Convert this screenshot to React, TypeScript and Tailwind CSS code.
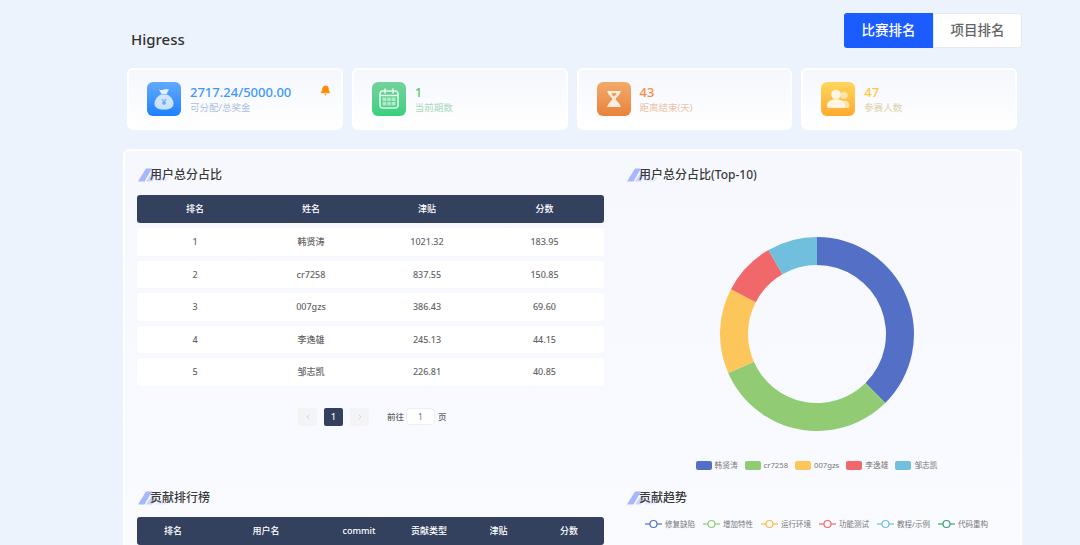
import { Bell, ChevronLeft, ChevronRight } from 'lucide-react';

const stats = [
  { value: '2717.24/5000.00', label: '可分配/总奖金', tile: 'from-[#62aafb] to-[#1a80ff]', valueCls: 'text-[#3f98fb]', labelCls: 'text-[#abc0de]', icon: 'bag' },
  { value: '1', label: '当前期数', tile: 'from-[#72d29b] to-[#37d07f]', valueCls: 'text-[#5ac963]', labelCls: 'text-[#a8d9bd]', icon: 'calendar' },
  { value: '43', label: '距离结束(天)', tile: 'from-[#f2aa6b] to-[#e8833a]', valueCls: 'text-[#f68c4b]', labelCls: 'text-[#ebc3a9]', icon: 'hourglass' },
  { value: '47', label: '参赛人数', tile: 'from-[#ffd65c] to-[#ffaa2d]', valueCls: 'text-[#fbca3e]', labelCls: 'text-[#dad1a4]', icon: 'people' },
];

const users = [
  ['1', '韩贤涛', '1021.32', '183.95'],
  ['2', 'cr7258', '837.55', '150.85'],
  ['3', '007gzs', '386.43', '69.60'],
  ['4', '李逸雄', '245.13', '44.15'],
  ['5', '邹志凯', '226.81', '40.85'],
];

const slices = [
  { name: '韩贤涛', score: 183.95, color: '#5470c6' },
  { name: 'cr7258', score: 150.85, color: '#91cc75' },
  { name: '007gzs', score: 69.6, color: '#fcc65a' },
  { name: '李逸雄', score: 44.15, color: '#f0686a' },
  { name: '邹志凯', score: 40.85, color: '#70bfdc' },
];

const trends = [
  { name: '修复缺陷', color: '#5470c6' },
  { name: '增加特性', color: '#91cc75' },
  { name: '运行环境', color: '#fbb84a' },
  { name: '功能测试', color: '#f0686a' },
  { name: '教程/示例', color: '#70bfdc' },
  { name: '代码重构', color: '#3ba272' },
];

function StatIcon({ kind }: { kind: string }) {
  if (kind === 'bag') {
    return (
      <svg viewBox="0 0 34 34" className="h-full w-full">
        <path d="M12 7.500c2 1 3.500.5 5 0s3.500-.5 5 0l-2.500 4.500h-5z" fill="#fff" fillOpacity="0.85" />
        <path d="M14 12.500h6c4 2 6.500 5.500 6.500 9 0 4-3.500 6-9.500 6s-9.500-2-9.500-6c0-3.500 2.500-7 6.500-9z" fill="#fff" fillOpacity="0.75" />
        <text x="17" y="23" textAnchor="middle" fontSize="8.500" fontWeight="700" fill="#6aa9f5">¥</text>
      </svg>
    );
  }
  if (kind === 'calendar') {
    return (
      <svg viewBox="0 0 34 34" className="h-full w-full">
        <rect x="8" y="9" width="18" height="17" rx="3" fill="none" stroke="#fff" strokeOpacity="0.8" strokeWidth="1.600" />
        <path d="M8.500 13.500h17" stroke="#fff" strokeOpacity="0.8" strokeWidth="1.500" />
        <path d="M13 7v4M21 7v4" stroke="#fff" strokeOpacity="0.85" strokeWidth="1.500" strokeLinecap="round" />
        <path d="M10.500 15.500h13v8h-13z" fill="#fff" fillOpacity="0.55" />
        <path d="M10.500 19.500h13M14.800 15.500v8M19.200 15.500v8" stroke="#5ad08f" strokeWidth="0.900" />
      </svg>
    );
  }
  if (kind === 'hourglass') {
    return (
      <svg viewBox="0 0 34 34" className="h-full w-full">
        <path d="M10 9h14l-.8 1.500c-.8 3-3.700 4.500-4.700 6.500 1 2 3.900 3.500 4.700 6.500l.8 1.500H10l.8-1.500c.8-3 3.700-4.500 4.700-6.500-1-2-3.900-3.500-4.700-6.500z" fill="#fff" fillOpacity="0.82" />
        <path d="M14.500 11h5l-1.500 3.200h-2z" fill="#ee9c58" />
      </svg>
    );
  }
  return (
    <svg viewBox="0 0 34 34" className="h-full w-full">
      <circle cx="23" cy="13.500" r="3.600" fill="#fff" fillOpacity="0.55" />
      <path d="M22 18.500c4.500-.5 6.500 2 6.500 6 0 1-1 1.500-2.500 1.500h-5z" fill="#fff" fillOpacity="0.55" />
      <circle cx="15" cy="12.500" r="4.800" fill="#fff" fillOpacity="0.85" />
      <path d="M6 24c0-4.500 3.500-6.800 9-6.800s9 2.300 9 6.800c0 1.300-1 2-2.500 2h-13C7 26 6 25.300 6 24z" fill="#fff" fillOpacity="0.85" />
    </svg>
  );
}

function SectionTitle({ children }: { children: string }) {
  return (
    <div className="relative flex h-5 items-center pl-[13px] pt-[2px] text-[12px] font-medium text-[#3a3a3a]">
      <svg viewBox="0 0 35 14" className="absolute left-px top-[4px] h-[14px] w-[35px]">
        <path d="M0 13.500 8 .5h6L6.500 13.500z" fill="#a5b7ff" />
        <path d="M8 13.500 14 4.500h5l-5 9z" fill="#c8d3fe" />
        <path d="M17 13.500 21 9h10l-3 4.500z" fill="#e6ebfe" />
      </svg>
      <span className="relative">{children}</span>
    </div>
  );
}

function arcPath(start: number, end: number, r1: number, r2: number, c: number) {
  const pt = (a: number, r: number) => `${(c + r * Math.sin(a)).toFixed(2)} ${(c - r * Math.cos(a)).toFixed(2)}`;
  const large = end - start > Math.PI ? 1 : 0;
  return `M${pt(start, r1)}A${r1} ${r1} 0 ${large} 1 ${pt(end, r1)}L${pt(end, r2)}A${r2} ${r2} 0 ${large} 0 ${pt(start, r2)}Z`;
}

function Donut() {
  const total = slices.reduce((sum, s) => sum + s.score, 0);
  let angle = 0;
  return (
    <svg viewBox="0 0 200 200" className="h-[200px] w-[200px]">
      {slices.map((s) => {
        const start = angle;
        angle += (s.score / total) * Math.PI * 2;
        return <path key={s.name} d={arcPath(start, angle, 97, 69, 100)} fill={s.color} />;
      })}
    </svg>
  );
}

export default function App() {
  return (
    <div className="flex h-[545px] w-[1080px] flex-col overflow-hidden bg-[#ecf3fc] pl-[123px] pr-[58px] pt-[13px] font-['Noto_Sans','Noto_Sans_CJK_SC',sans-serif]">
      {/* Header */}
      <div className="flex h-[35px] shrink-0 justify-between">
        <h1 className="pl-2 pt-[15px] text-[15px] font-medium leading-[22px] text-[#333]">Higress</h1>
        <div className="flex h-[35px] text-[13.500px] font-medium">
          <div className="flex w-[89px] items-center justify-center rounded-l-[3px] bg-[#1a5cff] text-white">比赛排名</div>
          <div className="flex w-[89px] items-center justify-center rounded-r-[3px] border border-[#e4e9f2] bg-white text-[#666]">项目排名</div>
        </div>
      </div>

      {/* Stat cards */}
      <div className="mt-[20px] grid shrink-0 grid-cols-4 gap-[9px] pl-1 pr-[5px]">
        {stats.map((s) => (
          <div key={s.label} className="relative flex h-[62px] items-center rounded-md border-2 border-white bg-gradient-to-b from-[#f5f7fd] to-white pl-[18px]">
            <div className={`h-[34px] w-[34px] rounded-md bg-gradient-to-b ${s.tile}`}>
              <StatIcon kind={s.icon} />
            </div>
            <div className="mb-[1px] ml-[9px]">
              <div className={`text-[13px] font-medium leading-[18px] ${s.valueCls}`}>{s.value}</div>
              <div className={`text-[9.500px] leading-[14px] ${s.labelCls}`}>{s.label}</div>
            </div>
            {s.icon === 'bag' && (
              <Bell className="absolute right-[10px] top-[15px] h-[11px] w-[11px] fill-[#ff8a00] text-[#ff8a00]" />
            )}
          </div>
        ))}
      </div>

      {/* Main panel, runs past the bottom of the window */}
      <div className="mt-[19px] h-[640px] shrink-0 rounded-md border-2 border-white bg-gradient-to-b from-[#f6f8fe] to-[#fbfcff] px-3 pt-[13px]">
        <div className="grid grid-cols-[467px_381px] gap-x-[22px]">
          <div className="h-[323px]">
            <SectionTitle>用户总分占比</SectionTitle>
            <div className="mt-[11px] grid h-7 grid-cols-[116px_116px_116px_119px] items-center rounded-[3px] bg-[#33415f] text-center text-[9px] font-medium text-white">
              <span>排名</span>
              <span>姓名</span>
              <span>津贴</span>
              <span>分数</span>
            </div>
            <div className="mt-[5px] flex flex-col gap-[5px]">
              {users.map((row) => (
                <div key={row[0]} className="grid h-[27.600px] grid-cols-[116px_116px_116px_119px] items-center rounded-[3px] bg-white text-center text-[9px] font-medium text-[#666]">
                  {row.map((cell) => (
                    <span key={cell}>{cell}</span>
                  ))}
                </div>
              ))}
            </div>
            <div className="ml-[161px] mt-[22px] flex h-[18px] items-center text-[8.500px] font-medium text-[#666]">
              <div className="flex h-[18px] w-[19px] items-center justify-center rounded-[2px] bg-[#f4f4f5] text-[#c0c4cc]">
                <ChevronLeft className="h-2 w-2" />
              </div>
              <div className="ml-[7px] flex h-[18px] w-[19px] items-center justify-center rounded-[2px] bg-[#33415f] text-white">1</div>
              <div className="ml-[7px] flex h-[18px] w-[19px] items-center justify-center rounded-[2px] bg-[#f4f4f5] text-[#c0c4cc]">
                <ChevronRight className="h-2 w-2" />
              </div>
              <span className="ml-[18px]">前往</span>
              <div className="ml-[2px] flex h-[17px] w-[29px] items-center justify-center rounded-sm border border-[#eceef3] bg-white font-normal text-[#777]">1</div>
              <span className="ml-[3px]">页</span>
            </div>
          </div>

          <div className="h-[323px]">
            <SectionTitle>用户总分占比(Top-10)</SectionTitle>
            <div className="mt-[49.500px] flex justify-center">
              <Donut />
            </div>
            <div className="mt-[27px] flex justify-center gap-[7px] text-[7.700px] leading-[9px] text-[#777]">
              {slices.map((s) => (
                <div key={s.name} className="flex items-center gap-[3px]">
                  <span className="h-[9px] w-4 rounded-[2px]" style={{ backgroundColor: s.color }} />
                  <span>{s.name}</span>
                </div>
              ))}
            </div>
          </div>

          <div>
            <SectionTitle>贡献排行榜</SectionTitle>
            <div className="mt-[10px] grid h-7 grid-cols-[72px_114px_72px_68px_71px_70px] items-center rounded-[3px] bg-[#33415f] text-center text-[9px] font-medium text-white">
              <span>排名</span>
              <span>用户名</span>
              <span>commit</span>
              <span>贡献类型</span>
              <span>津贴</span>
              <span>分数</span>
            </div>
          </div>

          <div>
            <SectionTitle>贡献趋势</SectionTitle>
            <div className="mt-3 flex justify-center gap-2 text-[7.500px] leading-[10px] text-[#777]">
              {trends.map((t) => (
                <div key={t.name} className="flex items-center gap-[3px]">
                  <svg viewBox="0 0 17 10" className="h-[10px] w-[17px]">
                    <path d="M0 5h17" stroke={t.color} strokeWidth="1.200" />
                    <circle cx="8.500" cy="5" r="3.500" fill="#fbfcff" stroke={t.color} strokeWidth="1.200" />
                  </svg>
                  <span>{t.name}</span>
                </div>
              ))}
            </div>
          </div>
        </div>
      </div>
    </div>
  );
}
